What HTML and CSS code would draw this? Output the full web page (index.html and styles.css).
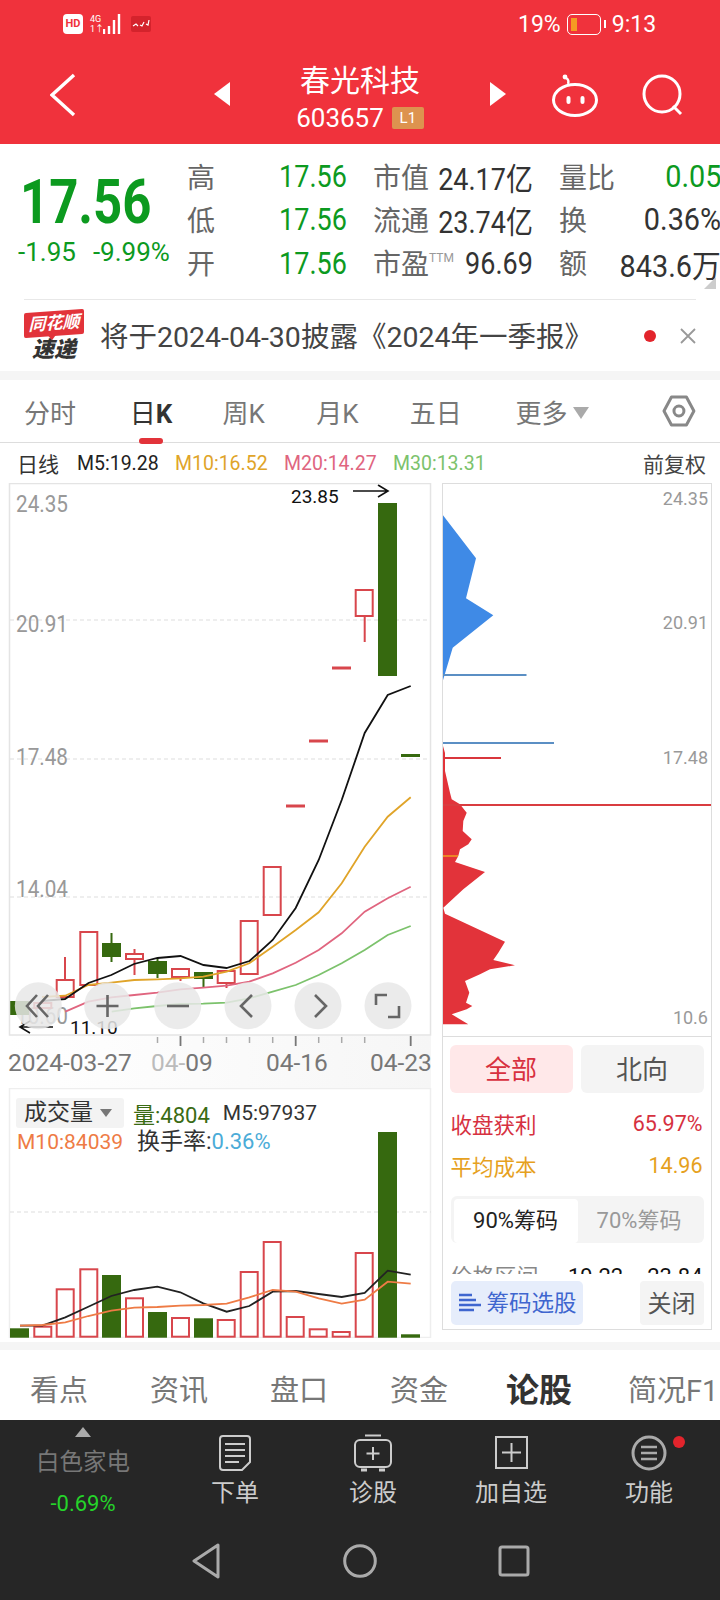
FILE: index.html
```html
<!DOCTYPE html>
<html lang="zh-CN">
<head>
    <meta charset="UTF-8">
    <meta name="viewport" content="width=device-width, initial-scale=1.0">
    <title>春光科技 603657</title>
    <link rel="stylesheet" href="styles.css">
</head>
<body>

    <div class="status">
        <span class="hd">HD</span>
        <div class="net"><span>4G</span><span>1↑</span></div>
        <svg class="bars" width="20" height="22" viewBox="0 0 20 22"><path d="M1 21v-5M6 21v-8M11 21V7M16 21V1" stroke="#fff" stroke-width="2.4"/></svg>
        <svg class="msg" width="20" height="16" viewBox="0 0 20 16"><rect width="20" height="16" rx="2" fill="#d4232c"/><path d="M2 10l3-2 2 2M9 9l2 1 2-4M15 8l2 1 1-5" stroke="#fff" stroke-width="1.2" fill="none"/></svg>
        <span class="batt-text">19%</span>
        <span class="batt"><i></i></span>
        <span class="clock">9:13</span>
    </div>

    <header class="head">
        <svg class="back" width="26" height="44" viewBox="0 0 26 44"><path d="M24 2L2 22l22 20" fill="none" stroke="#fff" stroke-width="3.4"/></svg>
        <svg width="16" height="24" viewBox="0 0 16 24"><path d="M16 0v24L0 12z" fill="#fff"/></svg>
        <div class="title">
            <div class="name">春光科技</div>
            <div class="code">603657<span class="l1">L1</span></div>
        </div>
        <svg width="16" height="24" viewBox="0 0 16 24"><path d="M0 0v24l16-12z" fill="#fff"/></svg>
        <svg class="robot" width="48" height="44" viewBox="0 0 48 44">
            <ellipse cx="24" cy="27" rx="21.5" ry="15.5" fill="none" stroke="#fff" stroke-width="3"/>
            <path d="M17 11c1-3 0-5-2-6" fill="none" stroke="#fff" stroke-width="2.4"/>
            <circle cx="14" cy="4" r="2.4" fill="#fff"/>
            <rect x="15.5" y="23" width="4" height="8" rx="2" fill="#fff"/>
            <rect x="29.5" y="23" width="4" height="8" rx="2" fill="#fff"/>
        </svg>
        <svg class="search" width="42" height="42" viewBox="0 0 42 42"><circle cx="20" cy="20" r="18" fill="none" stroke="#fff" stroke-width="3"/><path d="M31 32l8 8" stroke="#fff" stroke-width="3"/></svg>
    </header>

    <section class="quote">
        <div class="price">
            <div class="now">17.56</div>
            <div class="change"><span>-1.95</span><span>-9.99%</span></div>
        </div>
        <div class="stats">
            <div class="cell"><label>高</label><b class="down">17.56</b></div>
            <div class="cell"><label>市值</label><b>24.17亿</b></div>
            <div class="cell"><label>量比</label><b class="down">0.05</b></div>
            <div class="cell"><label>低</label><b class="down">17.56</b></div>
            <div class="cell"><label>流通</label><b>23.74亿</b></div>
            <div class="cell"><label>换</label><b>0.36%</b></div>
            <div class="cell"><label>开</label><b class="down">17.56</b></div>
            <div class="cell"><label>市盈<sup>TTM</sup></label><b>96.69</b></div>
            <div class="cell"><label>额</label><b>843.6万</b></div>
        </div>
        <span class="corner"></span>
    </section>

    <section class="news">
        <div class="logo">
            <span class="logo-top">同花顺</span>
            <span class="logo-bottom">速递</span>
        </div>
        <p>将于2024-04-30披露《2024年一季报》</p>
        <span class="dot"></span>
        <svg width="16" height="16" viewBox="0 0 16 16"><path d="M1 1l14 14M15 1L1 15" stroke="#999" stroke-width="1.8"/></svg>
    </section>

    <div class="band"></div>

    <nav class="periods">
        <a>分时</a>
        <a class="on">日<b>K</b></a>
        <a>周K</a>
        <a>月K</a>
        <a>五日</a>
        <a class="more">更多<i></i></a>
        <svg class="gear" width="34" height="32" viewBox="0 0 34 32"><path d="M9.500 2h15L32 16l-7.500 14h-15L2 16z" fill="none" stroke="#888" stroke-width="3" stroke-linejoin="round"/><circle cx="17" cy="16" r="5" fill="none" stroke="#888" stroke-width="3"/></svg>
    </nav>

    <div class="legend">
        <span class="l-name">日线</span>
        <span class="m5">M5:19.28</span>
        <span class="m10">M10:16.52</span>
        <span class="m20">M20:14.27</span>
        <span class="m30">M30:13.31</span>
        <span class="adj">前复权</span>
    </div>

    <main class="chart-row">
        <div class="charts">
            <svg class="kline" width="436" height="605" viewBox="0 483 436 605">
                <defs>
                    <linearGradient id="axisBg" x1="0" x2="1" y1="0" y2="0"><stop offset="0" stop-color="#fff"/><stop offset="1" stop-color="#f6f6f6"/></linearGradient>
                    <clipPath id="plot"><rect x="9" y="483" width="422" height="552"/></clipPath>
                </defs>
                <rect x="9" y="1036" width="422" height="52" fill="url(#axisBg)"/>
                <g stroke="#ddd" stroke-dasharray="4 3">
                    <path d="M10 620H431M10 759H431M10 897H431"/>
                </g>
                <g class="axis-y">
                    <text x="16" y="512" textLength="52" lengthAdjust="spacingAndGlyphs">24.35</text>
                    <text x="16" y="632" textLength="52" lengthAdjust="spacingAndGlyphs">20.91</text>
                    <text x="16" y="765" textLength="52" lengthAdjust="spacingAndGlyphs">17.48</text>
                    <text x="16" y="897" textLength="52" lengthAdjust="spacingAndGlyphs">14.04</text>
                    <text x="16" y="1024" textLength="52" lengthAdjust="spacingAndGlyphs">10.60</text>
                </g>

                <g fill="#36690f">
                    <rect x="10" y="1001" width="19" height="14"/>
                    <rect x="102" y="943" width="19" height="14"/>
                    <rect x="148" y="961" width="19" height="13"/>
                    <rect x="194" y="972" width="19" height="7"/>
                    <rect x="378" y="503" width="19" height="173"/>
                    <rect x="401" y="754" width="19" height="3"/>
                </g>
                <path d="M111.500 933V962M157.500 958V978M203.500 972V987" stroke="#36690f" stroke-width="2"/>
                <g fill="none" stroke="#d8464c" stroke-width="2">
                    <rect x="34.300" y="1003" width="17" height="5"/>
                    <rect x="56.700" y="980" width="17" height="17"/>
                    <rect x="80.300" y="932" width="17" height="53"/>
                    <rect x="126" y="954" width="17" height="5"/>
                    <rect x="172" y="969" width="17" height="8"/>
                    <rect x="217.700" y="971" width="17" height="12"/>
                    <rect x="240.700" y="921" width="17" height="53"/>
                    <rect x="263.700" y="867" width="17" height="48"/>
                    <rect x="355.700" y="590" width="17" height="26"/>
                    <path d="M65 957V979M134.500 949V953M134.500 960V975M180.500 977V981M226.500 983V988M364.700 616V642"/>
                </g>
                <g fill="#d8464c">
                    <rect x="286" y="804.500" width="19" height="3"/>
                    <rect x="309" y="739.500" width="19" height="3"/>
                    <rect x="332" y="666.500" width="19" height="3"/>
                </g>

                <g fill="none" stroke-width="1.800">
                    <polyline stroke="#7cc26c" points="111.700,1011.700 134.300,1008.300 157.300,1006 180.300,1004 203.300,1003.700 226.700,1002.700 249.300,998.300 272.700,991.700 295.700,985 318.700,975 341.700,963.300 364.700,950 387.700,935 410.700,926"/>
                    <polyline stroke="#e0657f" points="65.300,1011.700 88.300,1001.700 111.300,997.300 134.300,995 157.300,992.700 180.300,989.300 203.300,987.700 226.700,985.700 249.300,981.700 272.700,973.300 295.700,962.700 318.700,950 341.700,933.300 364.700,911.700 387.700,898.300 410.700,886.700"/>
                    <polyline stroke="#e0a429" points="42,997 65.300,995.700 88.300,985 111.300,982.700 134.300,980 157.300,979.300 180.300,978.300 203.300,976.700 226.700,971.700 249.300,963.300 272.700,946.700 295.700,930 318.700,912.300 341.700,883.300 364.700,846.700 387.700,816.700 410.700,797.300"/>
                    <polyline stroke="#111" points="42,1001 65,999 88.500,983 111.300,975 134,964 157.500,958 180.500,956 203.500,965 226.500,968 249.500,961 272.700,940 295.700,908 318.700,860 341.700,800 364.700,733 387.700,695 410.700,686"/>
                </g>

                <g class="mark">
                    <text x="291" y="503">23.85</text>
                    <path d="M353 491H387M378 485l10 6-10 6" fill="none" stroke="#111" stroke-width="1.600"/>
                </g>
                <g class="mark" clip-path="url(#plot)">
                    <text x="70" y="1034">11.10</text>
                    <path d="M53 1027H20M30 1021l-10 6 10 6" fill="none" stroke="#111" stroke-width="1.600"/>
                </g>

                <g fill="#e8e8e8" fill-opacity=".85">
                    <circle cx="38.300" cy="1005.700" r="23.500"/>
                    <circle cx="107.700" cy="1005.700" r="23.500"/>
                    <circle cx="177.700" cy="1005.700" r="23.500"/>
                    <circle cx="248" cy="1005.700" r="23.500"/>
                    <circle cx="318" cy="1005.700" r="23.500"/>
                    <circle cx="388" cy="1005.700" r="23.500"/>
                </g>
                <g fill="none" stroke="#666" stroke-width="2.600">
                    <path d="M37 995l-10 11 10 11M48 995l-10 11 10 11"/>
                    <path d="M96.500 1006h22M107.500 995v22"/>
                    <path d="M167 1006h22"/>
                    <path d="M252 995l-11 11 11 11"/>
                    <path d="M315 995l11 11-11 11"/>
                    <path d="M376 1005v-10h11M399 1006v11h-11"/>
                </g>

                <rect x="9.500" y="483.500" width="421" height="551.500" fill="none" stroke="#e4e4e4" stroke-width="1.500"/>
                <path d="M157.500 1037v6M203.500 1037v6M226.500 1037v6M249.500 1037v6M272.700 1037v6M318.700 1037v6M341.700 1037v6M364.700 1037v6" stroke="#aaa" stroke-width="1.500"/>
                <path d="M180.500 1036v10M295.700 1036v10M410.700 1036v10" stroke="#777" stroke-width="1.800"/>
                <g class="dates">
                    <text x="8" y="1071">2024-03-27</text>
                    <text x="151" y="1071"><tspan fill="#bbb">04-</tspan>09</text>
                    <text x="266" y="1071">04-16</text>
                    <text x="370" y="1071">04-23</text>
                </g>
            </svg>

            <div class="vol">
                <svg width="436" height="250" viewBox="0 1088 436 250">
                    <rect x="9.500" y="1088.500" width="421" height="249" fill="none" stroke="#eee" stroke-width="1.500"/>
                    <path d="M10 1212H431" stroke="#ddd" stroke-dasharray="4 3"/>
                    <g fill="#36690f">
                        <rect x="10" y="1328.300" width="19" height="9.400"/>
                        <rect x="102" y="1275" width="19" height="62.700"/>
                        <rect x="148" y="1312" width="19" height="25.700"/>
                        <rect x="194" y="1318.300" width="19" height="19.400"/>
                        <rect x="378" y="1132" width="19" height="205.700"/>
                        <rect x="401" y="1334.300" width="19" height="3.400"/>
                    </g>
                    <g fill="none" stroke="#d8464c" stroke-width="2">
                        <rect x="34.300" y="1326.700" width="17" height="10"/>
                        <rect x="56.700" y="1289.300" width="17" height="47.400"/>
                        <rect x="80.300" y="1269.300" width="17" height="67.400"/>
                        <rect x="126" y="1298.300" width="17" height="38.400"/>
                        <rect x="172" y="1318" width="17" height="18.700"/>
                        <rect x="217.700" y="1320" width="17" height="16.700"/>
                        <rect x="240.700" y="1272" width="17" height="64.700"/>
                        <rect x="263.700" y="1242" width="17" height="94.700"/>
                        <rect x="286.700" y="1317" width="17" height="19.700"/>
                        <rect x="309.700" y="1329.300" width="17" height="7.400"/>
                        <rect x="332.700" y="1332" width="17" height="4.700"/>
                        <rect x="355.700" y="1253" width="17" height="83.700"/>
                    </g>
                    <g fill="none" stroke-width="1.800">
                        <polyline stroke="#222" points="20,1325.700 42.300,1325.700 65.300,1317.300 88.300,1306.700 111.300,1296 134.300,1290 157.300,1286.700 180.300,1292.300 203.300,1303.300 226.700,1311.700 249.300,1306 272.700,1291.700 295.700,1291 318.700,1294 341.700,1297 364.700,1293 387.700,1270.700 410.700,1274.700"/>
                        <polyline stroke="#ee7b45" points="20,1325.700 42.300,1325 65.300,1322.300 88.300,1316 111.300,1310.700 134.300,1307.700 157.300,1307 180.300,1305.700 203.300,1305 226.700,1303.700 249.300,1297.300 272.700,1290 295.700,1291.700 318.700,1298.300 341.700,1303.700 364.700,1299.700 387.700,1281.700 410.700,1283.700"/>
                    </g>
                </svg>
                <div class="vol-label">
                    <div class="vol-top">
                        <span class="chip">成交量<i></i></span>
                        <span class="v-green">量:4804</span>
                        <span class="v-dark">M5:97937</span>
                    </div>
                    <div class="vol-sub">
                        <span class="v-orange">M10:84039</span>
                        <span class="v-rate">换手率:<em>0.36%</em></span>
                    </div>
                </div>
            </div>
        </div>

        <aside class="chips">
            <svg class="profile" width="268" height="553" viewBox="443 483 268 553">
                <polygon fill="#3f8ae6" points="443,514.300 476,557.300 466,597.300 493.300,614.300 452.700,646.700 443,679.300"/>
                <path d="M443 674H526.500M443 742H554" stroke="#5b8fc4" stroke-width="2"/>
                <path d="M443 757H501" stroke="#d9363c" stroke-width="2"/>
                <polygon fill="#e2333a" points="443,745 445,752 445,770 450,791.700 451.700,798.300 460,803.300 466.700,811.700 463.300,820 462.700,830 471.700,838.300 468.300,843.300 460,848.300 458.300,855 455,861 485,871 463.300,888.300 443.300,906.700 445,912.700 505,940.700 498.300,951.700 493.300,959 515,964.300 490,968.300 480,973.300 465,980 469.300,991.700 466,1001.700 472.300,1005 466.700,1008.300 451.700,1013.300 468.300,1023.300 443,1023.300"/>
                <path d="M443 804H711" stroke="#d93c40" stroke-width="2"/>
                <path d="M443 855H458" stroke="#f0a020" stroke-width="1.500"/>
                <g class="axis-r">
                    <text x="708" y="504">24.35</text>
                    <text x="708" y="628">20.91</text>
                    <text x="708" y="763">17.48</text>
                    <text x="708" y="1023">10.6</text>
                </g>
                <path d="M443 1035.500H711" stroke="#ddd"/>
            </svg>

            <div class="chip-tabs">
                <span class="active">全部</span>
                <span>北向</span>
            </div>
            <div class="kv red"><span>收盘获利</span><span>65.97%</span></div>
            <div class="kv amber"><span>平均成本</span><span>14.96</span></div>
            <div class="segment">
                <span class="seg-on">90%筹码</span>
                <span>70%筹码</span>
            </div>
            <div class="range">
                <span class="range-name">价格区间</span>
                <span>19.22</span>
                <span>23.84</span>
            </div>
            <div class="chip-actions">
                <span class="pick">
                    <svg width="22" height="22" viewBox="0 0 22 22"><path d="M0 3h13M0 8h17M0 13h22M0 18h15" stroke="#3f66cf" stroke-width="2.600"/></svg>
                    筹码选股
                </span>
                <span class="close">关闭</span>
            </div>
        </aside>
    </main>

    <div class="band short"></div>

    <nav class="sections">
        <a>看点</a>
        <a>资讯</a>
        <a>盘口</a>
        <a>资金</a>
        <a class="on">论股</a>
        <a>简况F1</a>
    </nav>

    <footer class="dock">
        <div class="tools">
            <div class="sector">
                <i></i>
                <span class="s-name">白色家电</span>
                <span class="s-pct">-0.69%</span>
            </div>
            <div class="tool">
                <svg width="36" height="38" viewBox="0 0 36 38"><path d="M6 2h24a3 3 0 0 1 3 3v23l-8 8H6a3 3 0 0 1-3-3V5a3 3 0 0 1 3-3z" fill="none" stroke="#ccc" stroke-width="2"/><path d="M8 10h20M8 16h20M8 22h20M8 28h14" stroke="#ccc" stroke-width="2"/></svg>
                <span>下单</span>
            </div>
            <div class="tool">
                <svg width="40" height="38" viewBox="0 0 40 38"><path d="M12 1.500h16" stroke="#ccc" stroke-width="2"/><rect x="2" y="6" width="36" height="27" rx="5" fill="none" stroke="#ccc" stroke-width="2"/><path d="M20 13v13M13.500 19.500h13" stroke="#ccc" stroke-width="2"/><path d="M8 36h6M26 36h6" stroke="#ccc" stroke-width="3"/></svg>
                <span>诊股</span>
            </div>
            <div class="tool">
                <svg width="38" height="38" viewBox="0 0 38 38"><rect x="4" y="3" width="31" height="31" fill="none" stroke="#ccc" stroke-width="2"/><path d="M19.500 9v19M10 18.500h19" stroke="#ccc" stroke-width="2"/></svg>
                <span>加自选</span>
            </div>
            <div class="tool">
                <svg width="38" height="38" viewBox="0 0 38 38"><circle cx="19" cy="19" r="16" fill="none" stroke="#aaa" stroke-width="3"/><path d="M11 13h16M11 19h16M11 25h16" stroke="#aaa" stroke-width="2.600"/></svg>
                <span class="badge"></span>
                <span>功能</span>
            </div>
        </div>
        <div class="sysnav">
            <svg width="30" height="36" viewBox="0 0 30 36"><path d="M27 2L3 18l24 16z" fill="none" stroke="#aaa" stroke-width="3" stroke-linejoin="round"/></svg>
            <svg width="34" height="34" viewBox="0 0 34 34"><circle cx="17" cy="17" r="15.300" fill="none" stroke="#aaa" stroke-width="3"/></svg>
            <svg width="32" height="32" viewBox="0 0 32 32"><rect x="2" y="2" width="28" height="28" rx="2" fill="none" stroke="#aaa" stroke-width="3"/></svg>
        </div>
    </footer>

</body>
</html>
```
FILE: styles.css
```css
* {
    margin: 0;
    padding: 0;
    box-sizing: border-box;
}

body {
    width: 720px;
    height: 1600px;
    overflow: hidden;
    background: #fff;
    font-family: Roboto, "Noto Sans CJK SC", sans-serif;
    color: #333;
}

svg {
    display: block;
}

svg text {
    font-family: Roboto, sans-serif;
}

/* status bar */
.status {
    height: 48px;
    padding-left: 63px;
    display: flex;
    align-items: center;
    background: #f0323c;
    color: #fff;
}

.hd {
    width: 20px;
    height: 20px;
    border-radius: 4px;
    background: #fff;
    color: #f0323c;
    font-size: 11px;
    font-weight: 700;
    line-height: 20px;
    text-align: center;
}

.net {
    width: 13px;
    margin-left: 7px;
    font-size: 9px;
    line-height: 10px;
    display: flex;
    flex-direction: column;
}

.msg {
    margin-left: 8px;
}

.batt-text {
    margin-left: 367px;
    font-size: 23px;
}

.batt {
    width: 34px;
    height: 21px;
    margin-left: 6px;
    padding: 3px;
    border: 1.5px solid #fff;
    border-radius: 5px;
    position: relative;
}

.batt::after {
    content: "";
    position: absolute;
    right: -6px;
    top: 5px;
    width: 2px;
    height: 8px;
    background: #fff;
}

.batt i {
    display: block;
    width: 6px;
    height: 100%;
    background: #f59a23;
}

.clock {
    margin-left: 11px;
    font-size: 23px;
}

/* stock header */
.head {
    height: 96px;
    display: grid;
    grid-template-columns: 214px 16px 260px 16px 136px 42px;
    align-items: center;
    background: #f0323c;
    color: #fff;
}

.back {
    margin: 0 0 3px 50px;
}

.head > svg:nth-of-type(2), .head > svg:nth-of-type(3) {
    margin-bottom: 4px;
}

.robot {
    margin: 0 0 2px 45px;
}

.search {
    margin-bottom: 2px;
}

.title {
    text-align: center;
}

.name {
    margin-top: 2px;
    font-size: 30px;
    line-height: 38px;
}

.code {
    margin-top: 3px;
    font-size: 26px;
    line-height: 30px;
    display: flex;
    justify-content: center;
    align-items: center;
}

.l1 {
    width: 32px;
    height: 22px;
    margin-left: 8px;
    background: #dd934f;
    border-radius: 2px;
    font-size: 15px;
    line-height: 22px;
}

/* quote */
.quote {
    height: 155px;
    display: grid;
    grid-template-columns: 187px 1fr;
    position: relative;
}

.now {
    width: 160px;
    margin: 27px 0 0 20px;
    font-size: 62px;
    font-weight: 700;
    line-height: 62px;
    color: #0c9a1f;
    transform: scaleX(.82);
    transform-origin: left;
}

.change {
    margin: 5px 0 0 18px;
    display: flex;
    gap: 17px;
    font-size: 26px;
    line-height: 28px;
    color: #0c9a1f;
    white-space: nowrap;
}

.stats {
    padding-top: 11px;
    display: grid;
    grid-template-columns: 160px 160px 162px;
    grid-auto-rows: 43.3px;
    column-gap: 26px;
}

.cell {
    display: flex;
    justify-content: space-between;
    align-items: center;
    white-space: nowrap;
}

.cell label {
    margin: 0 -20px 2px 0;
    font-size: 28px;
    color: #666;
}

.cell sup {
    font-size: 12px;
    color: #999;
    vertical-align: 12px;
    line-height: 0;
}

/* the app's digits are condensed, no installed family has those widths */
.cell b {
    display: inline-block;
    font-size: 31px;
    font-weight: 400;
    color: #333;
    transform: scaleX(.87);
    transform-origin: right;
}

.cell:nth-child(3n) b {
    transform: scaleX(.93);
}

.cell b.down {
    color: #0c9a1f;
}

.corner {
    position: absolute;
    right: 4px;
    bottom: 10px;
    border-style: solid;
    border-width: 0 0 12px 12px;
    border-color: transparent transparent #ccc transparent;
}

/* news */
.news {
    height: 72px;
    margin: 0 24px;
    border-top: 1px solid #e8e8e8;
    display: flex;
    align-items: center;
}

.logo {
    width: 60px;
    margin-top: 1px;
    text-align: center;
}

.logo-top {
    display: block;
    height: 25px;
    background: #e2333a;
    border-radius: 2px;
    color: #fff;
    font-size: 17px;
    font-weight: 700;
    font-style: italic;
    line-height: 25px;
    transform: skewY(-4deg);
    position: relative;
}

.logo-top::after {
    content: "";
    position: absolute;
    left: 24px;
    top: 24px;
    border-style: solid;
    border-width: 5px 4px 0 4px;
    border-color: #e2333a transparent transparent transparent;
}

.logo-bottom {
    display: block;
    margin-top: 1px;
    font-size: 22px;
    font-weight: 900;
    font-style: italic;
    line-height: 25px;
    color: #333;
}

.news p {
    width: 544px;
    margin: -2px 0 0 16px;
    font-size: 28.500px;
    color: #444;
    white-space: nowrap;
}

.dot {
    width: 12px;
    height: 12px;
    border-radius: 50%;
    background: #e2242c;
}

.news svg {
    margin-left: 24px;
}

.band {
    height: 9px;
    background: #f5f5f5;
}

.band.short {
    height: 8px;
}

/* period tabs */
.periods {
    height: 63px;
    border-bottom: 1px solid #ddd;
    display: flex;
    align-items: center;
    padding: 0 24px;
    font-size: 26px;
    color: #777;
    position: relative;
}

.periods a {
    width: 94px;
    white-space: nowrap;
}

.periods a.on {
    color: #333;
    margin-left: 12px;
    width: 93px;
    position: relative;
}

.periods a.on b {
    font-weight: 700;
}

.periods a.on::after {
    content: "";
    position: absolute;
    left: 9px;
    bottom: -14px;
    width: 24px;
    height: 6px;
    border-radius: 3px;
    background: #e2333a;
}

.periods a.more {
    margin-left: 12px;
    width: 147px;
}

.more i {
    display: inline-block;
    margin-left: 5px;
    vertical-align: 4px;
    border-style: solid;
    border-width: 12px 8px 0 8px;
    border-color: #aaa transparent transparent transparent;
}

/* ma legend */
.legend {
    height: 40px;
    padding: 0 12px 0 17px;
    display: flex;
    align-items: center;
    font-size: 21px;
    white-space: nowrap;
}

.l-name { color: #333; width: 60px; }
.m5 { color: #222; width: 98px; font-size: 19.500px; }
.m10 { color: #e0a429; width: 109px; font-size: 19.500px; }
.m20 { color: #e0657f; width: 109px; font-size: 19.500px; }
.m30 { color: #7cc26c; width: 250px; font-size: 19.500px; }
.adj { color: #444; }

/* charts */
.chart-row {
    height: 859px;
    display: flex;
}

.charts {
    width: 436px;
}

.axis-y text {
    font-size: 24px;
    fill: #999;
}

.mark text {
    font-size: 19px;
    fill: #111;
}

.dates text {
    font-size: 24.500px;
    fill: #777;
}

.vol {
    position: relative;
    height: 250px;
}

.vol-label {
    position: absolute;
    left: 16px;
    top: 9px;
    font-size: 23px;
    white-space: nowrap;
}

.vol-top {
    display: flex;
    align-items: center;
}

.chip {
    width: 108px;
    height: 30px;
    padding-left: 8px;
    border-radius: 3px;
    background: #f3f3f3;
    line-height: 30px;
    color: #333;
}

.chip i {
    display: inline-block;
    margin-left: 7px;
    vertical-align: 3px;
    border-style: solid;
    border-width: 8px 6px 0 6px;
    border-color: #777 transparent transparent transparent;
}

.v-green {
    margin-left: 9px;
    color: #3a6b14;
    font-size: 22px;
}

.v-dark {
    margin-left: 13px;
    color: #333;
    font-size: 21px;
}

.vol-sub {
    margin: -2px 0 0 1px;
    display: flex;
    line-height: 30px;
}

.v-orange {
    width: 120px;
    color: #ee7b45;
    font-size: 21px;
}

.v-rate {
    color: #333;
}

.v-rate em {
    font-style: normal;
    color: #4bacd8;
    font-size: 22px;
}

/* chip panel */
.chips {
    width: 270px;
    height: 847px;
    margin-left: 5.500px;
    border: 1px solid #ddd;
}

.axis-r text {
    font-size: 18px;
    fill: #999;
    text-anchor: end;
}

.chip-tabs {
    margin-top: 8px;
    padding: 0 7px;
    display: grid;
    grid-template-columns: 123px 123px;
    column-gap: 8px;
    font-size: 26px;
    line-height: 50px;
    text-align: center;
    color: #555;
}

.chip-tabs span {
    height: 48px;
    border-radius: 6px;
    background: #f4f4f4;
}

.chip-tabs .active {
    background: #ffe8e9;
    color: #d8303f;
}

.kv {
    height: 42px;
    padding: 0 8px;
    display: flex;
    justify-content: space-between;
    align-items: center;
    font-size: 21.500px;
}

.kv.red {
    margin-top: 9px;
    color: #d6313f;
}

.kv.amber {
    color: #e6a11e;
}

.segment {
    height: 47px;
    margin: 10px 7px 0 8px;
    padding: 3px;
    display: grid;
    grid-template-columns: 124px 1fr;
    background: #f4f4f4;
    border-radius: 6px;
    font-size: 22px;
    line-height: 44px;
    text-align: center;
    color: #999;
}

.seg-on {
    background: #fff;
    border-radius: 4px;
    color: #222;
}

.range {
    height: 31px;
    padding: 22px 8px 0;
    overflow: hidden;
    display: flex;
    font-size: 22px;
    line-height: 24px;
    color: #111;
}

.range-name {
    width: 134px;
    color: #888;
}

.range span:last-child {
    margin-left: 24px;
}

.chip-actions {
    margin-top: 7px;
    padding: 0 7px 0 8px;
    display: flex;
    justify-content: space-between;
    font-size: 24px;
    line-height: 46px;
}

.pick {
    width: 132px;
    height: 44px;
    padding-left: 8px;
    display: flex;
    align-items: center;
    gap: 6px;
    background: #e6edfb;
    border-radius: 5px;
    font-size: 22.500px;
    color: #3f66cf;
    white-space: nowrap;
}

.close {
    width: 64px;
    height: 44px;
    background: #f4f4f4;
    border-radius: 4px;
    text-align: center;
    color: #555;
}

/* section tabs */
.sections {
    height: 70px;
    padding: 6px 0 0 30px;
    display: flex;
    align-items: center;
    gap: 62px;
    font-size: 29px;
    color: #777;
    white-space: nowrap;
}

.sections a.on {
    margin: 0 -6px 0 -4px;
    font-size: 33px;
    font-weight: 700;
    color: #333;
}

/* bottom dock */
.dock {
    height: 180px;
    background: #262626;
}

.tools {
    height: 118px;
    display: grid;
    grid-template-columns: 166px repeat(4, 138px);
}

.sector {
    padding-top: 7px;
    display: flex;
    flex-direction: column;
    align-items: center;
}

.sector i {
    border-style: solid;
    border-width: 0 8px 10px 8px;
    border-color: transparent transparent #aaa transparent;
}

.s-name {
    margin-top: 9px;
    font-size: 23.500px;
    line-height: 32px;
    color: #777;
}

.s-pct {
    margin-top: 11px;
    font-size: 22px;
    line-height: 30px;
    color: #25d32a;
}

.tool {
    padding-top: 14px;
    display: flex;
    flex-direction: column;
    align-items: center;
    position: relative;
    font-size: 24px;
    color: #ccc;
}

.tool svg {
    margin-bottom: 1px;
}

.badge {
    position: absolute;
    left: 93px;
    top: 16px;
    width: 12px;
    height: 12px;
    border-radius: 50%;
    background: #e2242c;
}

.sysnav {
    padding-left: 129px;
    display: grid;
    grid-template-columns: repeat(3, 154px);
    justify-items: center;
    align-items: center;
    height: 46px;
}
```
